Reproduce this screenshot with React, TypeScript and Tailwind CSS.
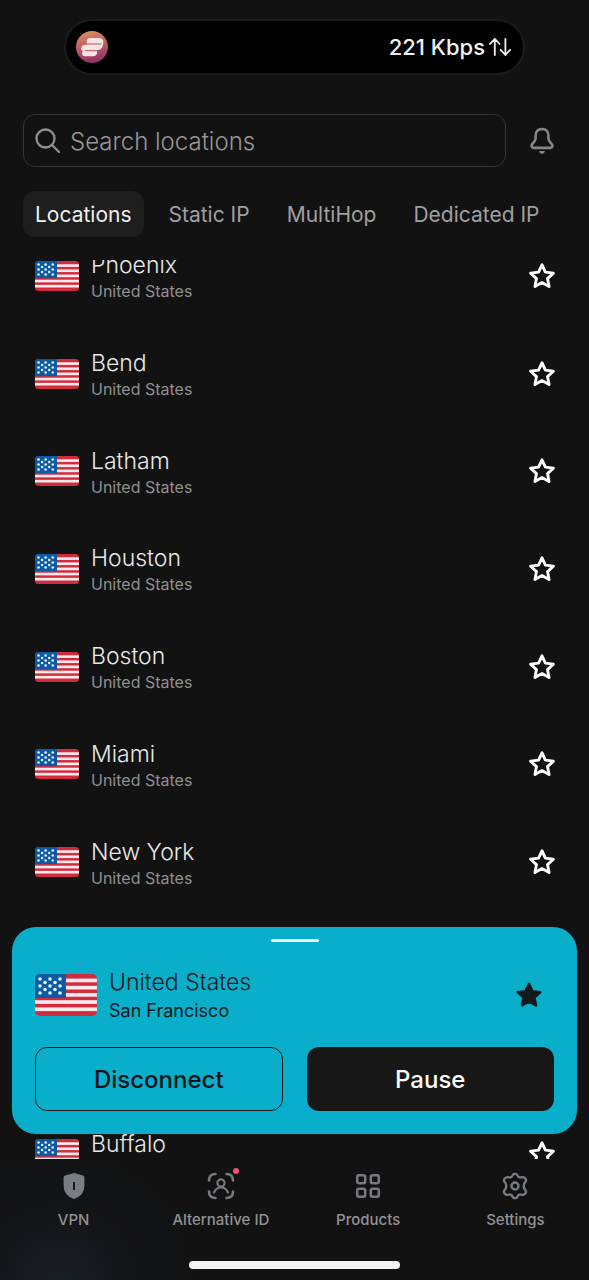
import { useState } from "react";

const CITIES = ["Phoenix", "Bend", "Latham", "Houston", "Boston", "Miami", "New York"];
const TABS = ["Locations", "Static IP", "MultiHop", "Dedicated IP"];

const FLAG_STARS = [
  [5, 5], [15, 5], [25, 5],
  [10, 8.5], [20, 8.5],
  [5, 12], [15, 12], [25, 12],
  [10, 15.5], [20, 15.5],
  [5, 19], [15, 19], [25, 19],
];

const STAR_PATH =
  "M15 3.8 18.41 11.11 26.41 12.09 20.52 17.59 22.05 25.51 15 21.6 7.95 25.51 9.48 17.59 3.59 12.09 11.59 11.11Z";

function Flag({ id, className }: { id: string; className: string }) {
  return (
    <svg viewBox="0 0 62 42" preserveAspectRatio="none" className={className} aria-hidden="true">
      <defs>
        <clipPath id={id}>
          <rect width="62" height="42" rx="5" />
        </clipPath>
      </defs>
      <g clipPath={`url(#${id})`}>
        <rect width="62" height="42" fill="#d02c3d" />
        {[0, 1, 2, 3, 4].map((i) => (
          <rect key={i} y={4.6 + i * 7.2} width="62" height="3.7" fill="#fbe9ec" />
        ))}
        <rect width="31" height="24" fill="#0b5aa6" />
        {FLAG_STARS.map(([x, y], i) => (
          <circle key={i} cx={x} cy={y} r="1.8" fill="#e8f4ff" />
        ))}
      </g>
    </svg>
  );
}

function StarOutline() {
  return (
    <svg viewBox="0 0 30 30" className="size-[30px]" fill="none" stroke="#fff" strokeWidth="2.9" strokeLinejoin="round" aria-hidden="true">
      <path d={STAR_PATH} />
    </svg>
  );
}

function StarSolid() {
  return (
    <svg viewBox="0 0 30 30" className="size-[30px]" fill="#141a1c" stroke="#141a1c" strokeWidth="2.4" strokeLinejoin="round" aria-hidden="true">
      <path d={STAR_PATH} />
    </svg>
  );
}

function LocationRow({ city }: { city: string }) {
  return (
    <li className="flex items-center pr-8 pl-[35px]">
      <Flag id={`flag-${city.replace(" ", "-")}`} className="h-[30px] w-11 shrink-0" />
      <div className="ml-3 flex-1 pt-[3px]">
        <p className="text-[23px] leading-7 font-light text-[#e8e8e8]">{city}</p>
        <p className="text-[16px] leading-6 text-[#8f8f8f]">United States</p>
      </div>
      <button type="button" aria-label={`Add ${city} to favourites`}>
        <StarOutline />
      </button>
    </li>
  );
}

function AppLogo() {
  return (
    <svg viewBox="0 0 96 96" className="size-8" aria-hidden="true">
      <defs>
        <linearGradient id="logo" x1="0.4" y1="0" x2="0.6" y2="1">
          <stop offset="0" stopColor="#d98b5c" />
          <stop offset="0.5" stopColor="#b8586a" />
          <stop offset="1" stopColor="#8f2f68" />
        </linearGradient>
      </defs>
      <circle cx="48" cy="48" r="48" fill="url(#logo)" />
      <path
        d="M41 21H69Q83 21 82 36Q80 57 66 57H63Q66 75 52 76H27Q18 76 18 67Q18 61 21 59Q13 59 16 50Q19 41 28 41H33Q29 21 41 21Z"
        fill="#f6e4e0"
      />
      <path d="M32 39H75M29 59H65" stroke="#a8566a" strokeWidth="3" strokeLinecap="round" />
    </svg>
  );
}

function NavIcon({ name }: { name: string }) {
  if (name === "VPN") {
    return (
      <svg viewBox="0 0 28 28" className="size-7" aria-hidden="true">
        <path d="M14 1 23 3.4Q24.4 3.9 24.4 5.6V14Q24.4 23.5 14 27Q3.6 23.5 3.6 14V5.6Q3.6 3.9 5 3.4Z" fill="#777d83" />
        <path d="M14 10V18" stroke="#15181c" strokeWidth="2" />
      </svg>
    );
  }
  if (name === "Alternative ID") {
    return (
      <svg viewBox="0 0 28 28" className="size-7" fill="none" stroke="#777b7f" strokeWidth="2.6" strokeLinecap="round" aria-hidden="true">
        <path d="M2 8.5Q2 2 8.5 2M19.5 2Q26 2 26 8.5M26 19.5Q26 26 19.5 26M8.5 26Q2 26 2 19.5" />
        <circle cx="14" cy="11" r="3.6" strokeWidth="2.2" />
        <path d="M7 20.5Q9 15.5 14 15.5Q19 15.5 21 20.5" strokeWidth="2.2" />
      </svg>
    );
  }
  if (name === "Products") {
    return (
      <svg viewBox="0 0 28 28" className="size-7" fill="none" stroke="#777b7f" strokeWidth="2.5" aria-hidden="true">
        <rect x="3.2" y="3.2" width="8" height="8" rx="2" />
        <rect x="16.8" y="3.2" width="8" height="8" rx="2" />
        <rect x="3.2" y="16.8" width="8" height="8" rx="2" />
        <rect x="16.8" y="16.8" width="8" height="8" rx="2" />
      </svg>
    );
  }
  return (
    <svg viewBox="0 0 28 28" className="size-7" fill="none" stroke="#777b7f" strokeWidth="2.4" strokeLinejoin="round" aria-hidden="true">
      <path d="M11.4 3.6Q12 1.8 14 1.8T16.6 3.6Q17.4 5.8 19.8 5.4L21.6 5.1Q23.6 5 24.6 6.8T24.4 9.8Q22.6 11.6 22.8 14Q22.6 16.4 24.4 18.2Q25.6 19.6 24.6 21.2T21.6 22.9L19.8 22.6Q17.4 22.2 16.6 24.4Q16 26.2 14 26.2T11.4 24.4Q10.6 22.2 8.2 22.6L6.4 22.9Q4.4 23 3.4 21.2T3.6 18.2Q5.4 16.4 5.2 14Q5.4 11.6 3.6 9.8Q2.4 8.4 3.4 6.8T6.4 5.1L8.2 5.4Q10.6 5.8 11.4 3.6Z" />
      <circle cx="14" cy="14" r="3.5" />
    </svg>
  );
}

export default function App() {
  const [tab, setTab] = useState("Locations");

  return (
    <div className="flex min-h-screen flex-col bg-[#121212] font-['Inter',sans-serif] text-white">
      <div className="mx-16 mt-[19px] flex h-14 items-center justify-between rounded-full border-2 border-[#1c1c1c] bg-black pr-3 pl-[10px]">
        <AppLogo />
        <div className="flex items-center gap-1 text-[22px] font-medium text-[#f2f2f2]">
          <span>221 Kbps</span>
          <svg viewBox="0 0 22 22" className="size-[22px]" fill="none" stroke="#f2f2f2" strokeWidth="1.8" strokeLinecap="round" strokeLinejoin="round" aria-hidden="true">
            <path d="M5.8 19V2.8M1 8 5.8 2.8 10.6 8M16.4 2.8V19M11.6 13.8 16.4 19 21.2 13.8" />
          </svg>
        </div>
      </div>

      <div className="mt-[39px] flex items-center pr-[33px] pl-[23px]">
        <label className="flex h-[53px] min-w-0 flex-1 items-center rounded-xl border border-[#363636] pl-[11px]">
          <svg viewBox="0 0 26 26" className="size-[26px] shrink-0" fill="none" stroke="#8f8f8f" strokeWidth="2.3" strokeLinecap="round" aria-hidden="true">
            <circle cx="10.5" cy="10.5" r="9" />
            <path d="M17 17 24 24" />
          </svg>
          <input
            type="search"
            aria-label="Search locations"
            placeholder="Search locations"
            className="ml-[9px] min-w-0 flex-1 bg-transparent pt-0.5 text-[24px] font-light outline-none placeholder:text-[#979797]"
          />
        </label>
        <button type="button" aria-label="Notifications" className="ml-[22px]">
          <svg viewBox="0 0 28 28" className="size-7" fill="none" stroke="#85868a" strokeWidth="2.6" aria-hidden="true">
            <path d="M14 2C9.6 2 7.6 5 7.6 8.5V11.5C7.6 13.5 6.4 14.6 4.8 16.4C2.8 18.6 3.4 20.9 5.8 20.9H22.2C24.6 20.9 25.2 18.6 23.2 16.4C21.6 14.6 20.4 13.5 20.4 11.5V8.5C20.4 5 18.4 2 14 2Z" />
            <path d="M11 24H17Q16.2 27 14 27T11 24Z" fill="#85868a" stroke="none" />
          </svg>
        </button>
      </div>

      <div role="tablist" className="mt-6 flex gap-[13px] pl-[23px]">
        {TABS.map((name) => (
          <button
            key={name}
            type="button"
            role="tab"
            aria-selected={tab === name}
            onClick={() => setTab(name)}
            className={
              tab === name
                ? "h-[46px] rounded-xl bg-[#1e1e1e] px-3 pt-0.5 text-[21px] whitespace-nowrap text-[#f0f0f0]"
                : "h-[46px] rounded-xl px-3 pt-0.5 text-[21px] whitespace-nowrap text-[#a0a0a0]"
            }
          >
            {name}
          </button>
        ))}
      </div>

      <main className="mt-[23px] flex flex-1 flex-col">
        <div className="overflow-hidden">
          <ul className="-mt-[33px] grid min-h-[684px] auto-rows-fr">
            {CITIES.map((city) => (
              <LocationRow key={city} city={city} />
            ))}
          </ul>
        </div>

        <section className="mx-3 mt-4 rounded-3xl bg-[#09aeca] px-[23px] pt-3 pb-[23px] text-[#0d1b20]">
          <div className="mx-auto h-[3px] w-12 rounded-full bg-[#e6fafd]" />
          <div className="mt-6 flex items-center">
            <Flag id="flag-current" className="h-[42px] w-[62px] shrink-0" />
            <div className="ml-3 flex-1">
              <p className="text-[23px] leading-8 font-light">United States</p>
              <p className="text-[18px] leading-[26px]">San Francisco</p>
            </div>
            <button type="button" aria-label="Remove from favourites" className="mr-[10px]">
              <StarSolid />
            </button>
          </div>
          <div className="mt-[23px] grid grid-cols-2 gap-6">
            <button type="button" className="h-16 rounded-xl border border-[#06141a] pt-0.5 text-[24px] font-medium text-[#06141a]">
              Disconnect
            </button>
            <button type="button" className="h-16 rounded-xl bg-[#171717] pt-0.5 text-[24px] font-medium text-white">
              Pause
            </button>
          </div>
        </section>

        <div className="h-[25px] overflow-hidden">
          <ul className="-mt-[29px] grid min-h-[98px]">
            <LocationRow city="Buffalo" />
          </ul>
        </div>
      </main>

      <nav className="bg-[radial-gradient(circle_at_10%_100%,#191d26_0%,#131416_14%,#121212_30%)] pt-[13px] pb-3">
        <div className="grid grid-cols-4">
          {["VPN", "Alternative ID", "Products", "Settings"].map((name) => (
            <a key={name} href="#" className="flex flex-col items-center gap-2 text-[15px] leading-6 font-medium text-[#929292]">
              <span className="relative">
                <NavIcon name={name} />
                {name === "Alternative ID" && (
                  <span className="absolute -top-1 -right-1 size-[6px] rounded-full bg-[#f0506e]" />
                )}
              </span>
              {name}
            </a>
          ))}
        </div>
        <div className="mx-auto mt-[29px] h-2 w-[211px] rounded-full bg-[#f4f4f5]" />
      </nav>
    </div>
  );
}
